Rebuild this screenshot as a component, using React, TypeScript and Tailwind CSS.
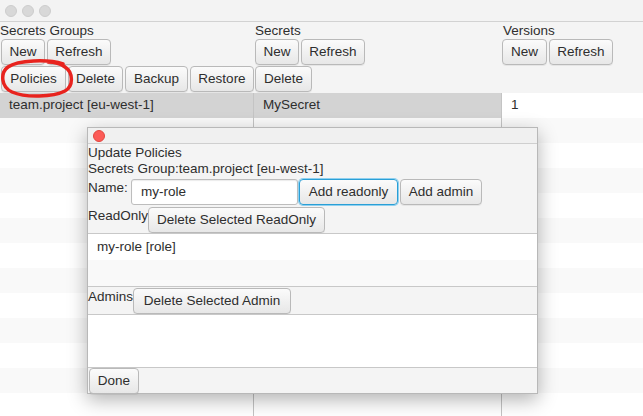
import React from "react";

const Btn = ({
  label,
  w,
  focused = false,
}: {
  label: string;
  w: string;
  focused?: boolean;
}) => (
  <button
    className={`${w} h-[26px] shrink-0 rounded-[4px] border text-[13.5px] leading-none text-[#2e2e2e] bg-[linear-gradient(#fbfbfb,#e7e7e7)] shadow-[0_1px_0_rgba(0,0,0,0.06)] ${
      focused
        ? "border-[#2a9fd6] ring-1 ring-[#8fd0ef]"
        : "border-[#b9b9b9]"
    }`}
  >
    {label}
  </button>
);

const Table = ({
  first,
  selected = false,
  border = true,
}: {
  first?: string;
  selected?: boolean;
  border?: boolean;
}) => {
  const rows = Array.from({ length: 14 });
  return (
    <div
      className={`flex-1 overflow-hidden flex flex-col ${
        border ? "border-r border-[#c4c4c4]" : ""
      }`}
    >
      {rows.map((_, i) => {
        const bg =
          i === 0 && selected
            ? "bg-[#d3d3d3]"
            : i % 2 === 0
            ? "bg-white"
            : "bg-[#f9f9f9]";
        return (
          <div
            key={i}
            className={`h-[25px] shrink-0 flex items-center pl-[9px] text-[13.5px] text-[#2e2e2e] ${bg}`}
          >
            {i === 0 ? first : ""}
          </div>
        );
      })}
    </div>
  );
};

export default function App() {
  return (
    <div className="relative w-[643px] h-[416px] overflow-hidden bg-[#f4f4f4] font-['Liberation_Sans',Arial,sans-serif] text-[#2e2e2e] text-[13.5px]">
      {/* window title bar */}
      <div className="h-[22px] flex items-center gap-[5px] pl-[5px] bg-[#f3f3f3] border-b border-[#d2d2d2]">
        <span className="w-[12px] h-[12px] rounded-full bg-[#d8d8d8] border border-[#cdcdcd]" />
        <span className="w-[12px] h-[12px] rounded-full bg-[#d8d8d8] border border-[#cdcdcd]" />
        <span className="w-[12px] h-[12px] rounded-full bg-[#d8d8d8] border border-[#cdcdcd]" />
      </div>

      <div className="flex h-[394px]">
        {/* Secrets Groups */}
        <div className="w-[254px] flex flex-col">
          <div className="h-[17px] leading-[17px]">Secrets Groups</div>
          <div className="flex gap-[2px] pl-[1px]">
            <Btn label="New" w="w-[44px]" />
            <Btn label="Refresh" w="w-[64px]" />
          </div>
          <div className="flex gap-[2px] pl-[1px] mt-[1px]">
            <Btn label="Policies" w="w-[65px]" />
            <Btn label="Delete" w="w-[55px]" />
            <Btn label="Backup" w="w-[63px]" />
            <Btn label="Restore" w="w-[64px]" />
          </div>
          <div className="h-[1px]" />
          <Table first="team.project [eu-west-1]" selected />
        </div>

        {/* Secrets */}
        <div className="w-[248px] flex flex-col">
          <div className="h-[17px] leading-[17px] pl-[1px]">Secrets</div>
          <div className="flex gap-[2px] pl-[1px]">
            <Btn label="New" w="w-[44px]" />
            <Btn label="Refresh" w="w-[64px]" />
          </div>
          <div className="flex gap-[2px] pl-[1px] mt-[1px]">
            <Btn label="Delete" w="w-[57px]" />
          </div>
          <div className="h-[1px]" />
          <Table first="MySecret" selected />
        </div>

        {/* Versions */}
        <div className="flex-1 flex flex-col">
          <div className="h-[17px] leading-[17px] pl-[1px]">Versions</div>
          <div className="flex gap-[2px]">
            <Btn label="New" w="w-[45px]" />
            <Btn label="Refresh" w="w-[64px]" />
          </div>
          <div className="h-[28px]" />
          <Table first="1" border={false} />
        </div>
      </div>

      {/* red annotation ring */}
      <svg
        className="absolute left-0 top-[58px]"
        width="76"
        height="42"
        viewBox="0 0 76 42"
        fill="none"
      >
        <path
          d="M63 6 C48 1 18 2 8 9 C0 15 1 29 12 34 C26 40 53 39 65 33 C74 28 73 14 65 9 C61 6 55 4 48 4"
          stroke="#e8231e"
          strokeWidth="3.5"
          strokeLinecap="round"
        />
      </svg>

      {/* Update Policies dialog */}
      <div className="absolute left-[87px] top-[127px] w-[451px] h-[267px] flex flex-col bg-[#f4f4f4] border border-[#b8b8b8] shadow-[0_6px_18px_rgba(0,0,0,0.3)]">
        <div className="h-[16px] shrink-0 flex items-center pl-[5px] bg-[#f0f0f0] border-b border-[#cfcfcf]">
          <span className="w-[12px] h-[12px] rounded-full bg-[#fc5b57] border border-[#e2463f]" />
        </div>
        <div className="h-[16px] leading-[16px] mt-[1px]">Update Policies</div>
        <div className="h-[16px] leading-[16px]">
          Secrets Group:team.project [eu-west-1]
        </div>
        <div className="flex items-start h-[26px] mt-[2px]">
          <span className="leading-[16px] w-[43px] pt-[1px]">Name:</span>
          <div className="w-[167px] h-[26px] flex items-center pl-[9px] bg-white border border-[#bdbdbd] rounded-[3px] shadow-[inset_0_1px_1px_rgba(0,0,0,0.08)]">
            my-role
          </div>
          <div className="ml-[1px] flex gap-[2px]">
            <Btn label="Add readonly" w="w-[99px]" focused />
            <Btn label="Add admin" w="w-[82px]" />
          </div>
        </div>
        <div className="flex items-start h-[26px] mt-[2px]">
          <span className="leading-[16px] w-[60px] pt-[1px]">ReadOnly</span>
          <Btn label="Delete Selected ReadOnly" w="w-[177px]" />
        </div>
        <div className="h-[54px] shrink-0 flex flex-col border-y border-[#c8c8c8] bg-white">
          <div className="h-[26px] flex items-center pl-[9px] bg-white">
            my-role [role]
          </div>
          <div className="flex-1 bg-[#f9f9f9]" />
        </div>
        <div className="flex items-start h-[27px] pt-[1px]">
          <span className="leading-[16px] w-[45px] pt-[1px]">Admins</span>
          <Btn label="Delete Selected Admin" w="w-[158px]" />
        </div>
        <div className="h-[54px] shrink-0 border-y border-[#c8c8c8] bg-white" />
        <div className="flex items-center h-[26px] pl-[1px]">
          <Btn label="Done" w="w-[50px]" />
        </div>
      </div>
    </div>
  );
}
